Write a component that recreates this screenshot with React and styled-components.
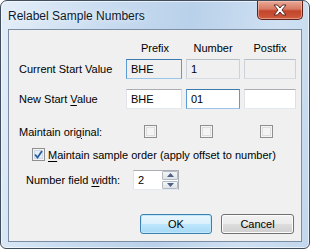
import React from "react";
import styled, { createGlobalStyle } from "styled-components";

const Global = createGlobalStyle`
  html, body { margin: 0; padding: 0; background: #ffffff; }
  body { font-family: "Liberation Sans", Arial, sans-serif; font-size: 11px; color: #000; }
`;

const Frame = styled.div`
  width: 310px;
  height: 249px;
  box-sizing: border-box;
  border: 1px solid #3f4d5c;
  border-radius: 7px 7px 6px 6px;
  background: linear-gradient(100deg, #e4eef8 0%, #c9dcf0 30%, #b9d1ea 55%, #cfe0f2 80%, #c2d7ed 100%);
  box-shadow: inset 0 0 0 1px rgba(255, 255, 255, 0.6);
  display: flex;
  flex-direction: column;
  overflow: hidden;
`;

const TitleBar = styled.div`
  height: 28px;
  display: flex;
  align-items: flex-start;
  justify-content: space-between;
  padding-left: 7px;
`;

const Title = styled.div`
  font-size: 12px;
  color: #0b1a2e;
  margin-top: 8px;
  text-shadow: 0 0 6px rgba(255, 255, 255, 0.9);
`;

const CloseButton = styled.div`
  width: 46px;
  height: 19px;
  margin-right: 6px;
  box-sizing: border-box;
  border: 1px solid #5e231a;
  border-top: none;
  border-radius: 0 0 5px 5px;
  background: linear-gradient(#e8a897 0%, #d77a63 45%, #c2452c 55%, #cf5b3d 100%);
  box-shadow: inset 0 0 0 1px rgba(255, 210, 195, 0.5);
  display: flex;
  align-items: center;
  justify-content: center;
`;

const Client = styled.div`
  margin: 0 7px;
  height: 213px;
  box-sizing: border-box;
  border: 1px solid #7a8da3;
  background: #f0f0f0;
  padding: 10px 7px 0 10px;
  display: flex;
  flex-direction: column;
  white-space: nowrap;
`;

const Grid = styled.div`
  display: grid;
  grid-template-columns: 103px 56px 54px 52px;
  column-gap: 4px;
  align-items: center;
  height: ${(p) => p.$h}px;
  margin-top: ${(p) => p.$mt || 0}px;
`;

const Header = styled.div`
  text-align: center;
  padding-left: ${(p) => p.$shift || 0}px;
`;

const Label = styled.div`
  white-space: nowrap;
  width: ${(p) => (p.$w ? `${p.$w}px` : "auto")};
`;

const TextBox = styled.div`
  height: 20px;
  box-sizing: border-box;
  border: 1px solid ${(p) => (p.$focus ? "#5a9bd5" : p.$disabled ? "#c4cad2" : "#abadb3")};
  border-top-color: ${(p) => (p.$focus ? "#3d7bad" : p.$disabled ? "#b7bec8" : "#abadb3")};
  border-left-color: ${(p) => (p.$focus ? "#5a9bd5" : p.$disabled ? "#cbd2da" : "#e2e3ea")};
  border-right-color: ${(p) => (p.$focus ? "#5a9bd5" : p.$disabled ? "#cbd2da" : "#dbdfe6")};
  border-bottom-color: ${(p) => (p.$focus ? "#9ac4e8" : p.$disabled ? "#d8dde3" : "#e3e9ef")};
  background: ${(p) => (p.$disabled ? "#f0f0f0" : "#ffffff")};
  padding-left: 4px;
  display: flex;
  align-items: center;
`;

const Check = styled.div`
  width: 13px;
  height: 13px;
  box-sizing: border-box;
  border: 1px solid #8f8f8f;
  background: ${(p) => (p.$checked ? "#e4eef7" : "#f4f4f4")};
  box-shadow: inset 0 0 0 1px #f4f4f4, inset 0 0 0 2px ${(p) => (p.$checked ? "#c9d9ea" : "#dedede")};
  margin-left: ${(p) => p.$ml || 0}px;
  display: flex;
  align-items: center;
  justify-content: center;
`;

const Row = styled.div`
  display: flex;
  align-items: center;
  height: ${(p) => p.$h}px;
  margin-top: ${(p) => p.$mt}px;
  padding-left: ${(p) => p.$pl || 0}px;
  gap: ${(p) => p.$gap || 0}px;
`;

const U = styled.span`
  text-decoration: underline;
  text-underline-offset: 2px;
`;

const Spin = styled.div`
  display: flex;
  height: 20px;
  border: 1px solid #abadb3;
  border-left-color: #e2e3ea;
  border-bottom-color: #e3e9ef;
  box-sizing: border-box;
  background: #fff;
`;

const SpinText = styled.div`
  width: 24px;
  padding-left: 4px;
  display: flex;
  align-items: center;
`;

const SpinButtons = styled.div`
  width: 16px;
  display: flex;
  flex-direction: column;
  gap: 1px;
`;

const SpinButton = styled.div`
  flex: 1;
  border: 1px solid #b2bac4;
  border-radius: 1px;
  background: linear-gradient(#f4f5f7, #dfe3e8);
  display: flex;
  align-items: center;
  justify-content: center;
`;

const ButtonRow = styled.div`
  display: flex;
  justify-content: flex-end;
  gap: 9px;
  margin-top: 24px;
`;

const Button = styled.div`
  width: ${(p) => p.$w}px;
  height: 20px;
  box-sizing: border-box;
  border-radius: 3px;
  border: 1px solid ${(p) => (p.$default ? "#3c7fb1" : "#707070")};
  background: ${(p) =>
    p.$default
      ? "linear-gradient(#eaf6fd 0%, #d9f0fc 50%, #bee6fd 51%, #a7d9f5 100%)"
      : "linear-gradient(#f2f2f2 0%, #ebebeb 50%, #dddddd 51%, #cfcfcf 100%)"};
  box-shadow: inset 0 0 0 1px ${(p) => (p.$default ? "#bfe9fb" : "#fcfcfc")};
  display: flex;
  align-items: center;
  justify-content: center;
`;

const Arrow = ({ up }) => (
  <svg width="7" height="4" viewBox="0 0 7 4">
    <path d={up ? "M0 4 L3.5 0 L7 4 Z" : "M0 0 L3.5 4 L7 0 Z"} fill="#4d6185" />
  </svg>
);

const CloseX = () => (
  <svg width="14" height="12" viewBox="0 0 14 12">
    <path
      d="M1 1 L4.5 1 L7 4 L9.5 1 L13 1 L9 6 L13 11 L9.5 11 L7 8 L4.5 11 L1 11 L5 6 Z"
      fill="#ffffff"
      stroke="#5b2a22"
      strokeWidth="1"
      strokeLinejoin="round"
    />
  </svg>
);

const Tick = () => (
  <svg width="9" height="9" viewBox="0 0 9 9">
    <path d="M1 4.5 L3.5 7.5 L8 1" fill="none" stroke="#2d5c9e" strokeWidth="1.8" />
  </svg>
);

export default function App() {
  return (
    <>
      <Global />
      <Frame>
        <TitleBar>
          <Title>Relabel Sample Numbers</Title>
          <CloseButton>
            <CloseX />
          </CloseButton>
        </TitleBar>
        <Client>
          <Grid $h={15}>
            <span />
            <Header $shift={2}>Prefix</Header>
            <Header>Number</Header>
            <Header>Postfix</Header>
          </Grid>
          <Grid $h={20} $mt={4}>
            <Label>Current Start Value</Label>
            <TextBox $disabled $focus>BHE</TextBox>
            <TextBox $disabled>1</TextBox>
            <TextBox $disabled />
          </Grid>
          <Grid $h={20} $mt={10}>
            <Label>
              New Start <U>V</U>alue
            </Label>
            <TextBox>BHE</TextBox>
            <TextBox $focus>01</TextBox>
            <TextBox />
          </Grid>
          <Grid $h={13} $mt={16}>
            <Label>
              Maintain ori<U>g</U>inal:
            </Label>
            <Check $ml={18} />
            <Check $ml={14} />
            <Check $ml={16} />
          </Grid>
          <Row $h={13} $mt={10} $pl={13} $gap={3}>
            <Check $checked>
              <Tick />
            </Check>
            <span>
              <U>M</U>aintain sample order (apply offset to number)
            </span>
          </Row>
          <Row $h={20} $mt={9} $pl={7}>
            <Label $w={107}>
              Number field <U>w</U>idth:
            </Label>
            <Spin>
              <SpinText>2</SpinText>
              <SpinButtons>
                <SpinButton>
                  <Arrow up />
                </SpinButton>
                <SpinButton>
                  <Arrow />
                </SpinButton>
              </SpinButtons>
            </Spin>
          </Row>
          <ButtonRow>
            <Button $default $w={72}>OK</Button>
            <Button $w={73}>Cancel</Button>
          </ButtonRow>
        </Client>
      </Frame>
    </>
  );
}
